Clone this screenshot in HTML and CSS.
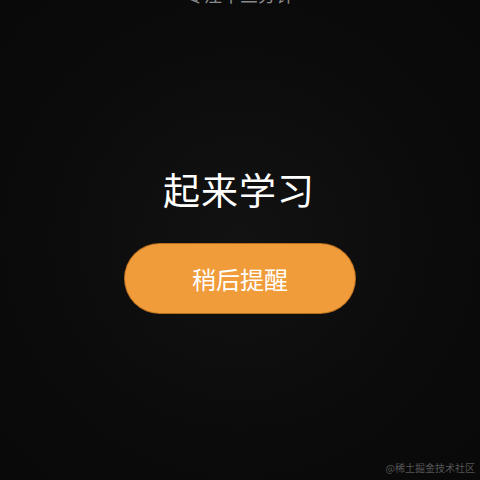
FILE: index.html
```html
<!DOCTYPE html>
<html lang="zh">
<head>
<meta charset="utf-8">
<link rel="stylesheet" href="styles.css">
</head>
<body>
<div class="screen">
  <div class="top-text">专注十三分钟</div>
  <div class="center">
    <div class="title">起来学习</div>
    <button class="later">稍后提醒</button>
  </div>
  <div class="mark">@稀土掘金技术社区</div>
</div>
</body>
</html>
```
FILE: styles.css
```css
html, body {
  margin: 0;
  padding: 0;
  background: #0a0a0a;
}
.screen {
  position: relative;
  width: 480px;
  height: 480px;
  overflow: hidden;
  background: radial-gradient(ellipse at 50% 50%, #121212 0%, #0b0b0b 60%, #090909 100%);
  font-family: "Noto Sans CJK SC", "Noto Sans", sans-serif;
  display: flex;
  flex-direction: column;
  align-items: center;
}
.top-text {
  margin-top: -18px;
  font-size: 18px;
  line-height: 24px;
  color: #8a8a8a;
}
.center {
  margin-top: 158px;
  display: flex;
  flex-direction: column;
  align-items: center;
}
.title {
  font-size: 37px;
  line-height: 50px;
  color: #ffffff;
  letter-spacing: 1px;
  margin-left: -2px;
}
.later {
  margin-top: 30px;
  width: 230px;
  height: 69px;
  border: none;
  border-radius: 35px;
  background: #f09c3a;
  box-shadow: 0 0 0 1px #b86e1e;
  color: #ffffff;
  font-family: "Noto Sans CJK SC", "Noto Sans", sans-serif;
  font-size: 24px;
  line-height: 1;
  padding: 0;
}
.mark {
  position: absolute;
  right: 5px;
  bottom: 5px;
  font-size: 10px;
  line-height: 14px;
  color: #555;
}
```
